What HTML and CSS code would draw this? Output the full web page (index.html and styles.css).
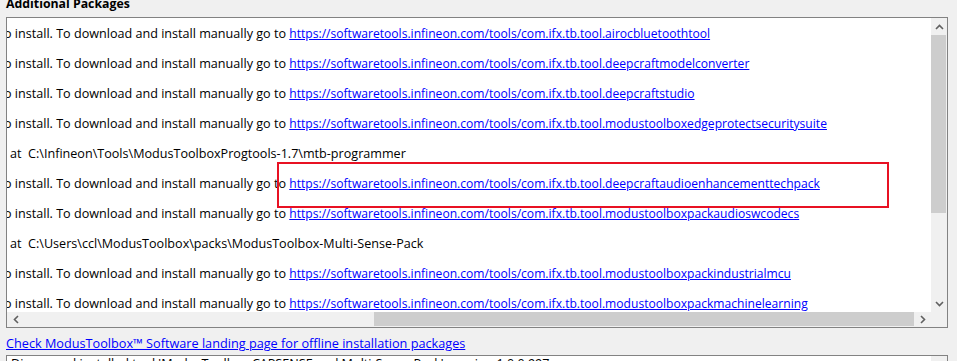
FILE: index.html
```html
<!DOCTYPE html>
<html>
<head>
<meta charset="utf-8">
<link rel="stylesheet" href="styles.css">
</head>
<body>
<div class="title">Additional Packages</div>
<div class="listbox">
  <div class="viewport">
    <div class="content">
      <div class="row"><span class="cut">o install. To download and install manually go to </span><a class="link">https://softwaretools.infineon.com/tools/com.ifx.tb.tool.airocbluetoothtool</a></div>
      <div class="row"><span class="cut">o install. To download and install manually go to </span><a class="link">https://softwaretools.infineon.com/tools/com.ifx.tb.tool.deepcraftmodelconverter</a></div>
      <div class="row"><span class="cut">o install. To download and install manually go to </span><a class="link">https://softwaretools.infineon.com/tools/com.ifx.tb.tool.deepcraftstudio</a></div>
      <div class="row"><span class="cut">o install. To download and install manually go to </span><a class="link">https://softwaretools.infineon.com/tools/com.ifx.tb.tool.modustoolboxedgeprotectsecuritysuite</a></div>
      <div class="row"><span class="at">at&nbsp; C:\Infineon\Tools\ModusToolboxProgtools-1.7\mtb-programmer</span></div>
      <div class="row"><span class="cut">o install. To download and install manually go to </span><a class="link">https://softwaretools.infineon.com/tools/com.ifx.tb.tool.deepcraftaudioenhancementtechpack</a></div>
      <div class="row"><span class="cut">o install. To download and install manually go to </span><a class="link">https://softwaretools.infineon.com/tools/com.ifx.tb.tool.modustoolboxpackaudioswcodecs</a></div>
      <div class="row"><span class="at">at&nbsp; C:\Users\ccl\ModusToolbox\packs\ModusToolbox-Multi-Sense-Pack</span></div>
      <div class="row"><span class="cut">o install. To download and install manually go to </span><a class="link">https://softwaretools.infineon.com/tools/com.ifx.tb.tool.modustoolboxpackindustrialmcu</a></div>
      <div class="row"><span class="cut">o install. To download and install manually go to </span><a class="link">https://softwaretools.infineon.com/tools/com.ifx.tb.tool.modustoolboxpackmachinelearning</a></div>
    </div>
    <div class="highlight"></div>
  </div>
  <div class="vscroll">
    <div class="arrow">
      <svg width="9" height="6" viewBox="0 0 9 6"><path d="M1 5 L4.5 1.5 L8 5" fill="none" stroke="#606060" stroke-width="1.6"/></svg>
    </div>
    <div class="vthumb"></div>
    <div class="vtrack"></div>
    <div class="arrow">
      <svg width="9" height="6" viewBox="0 0 9 6"><path d="M1 1 L4.5 4.5 L8 1" fill="none" stroke="#606060" stroke-width="1.6"/></svg>
    </div>
  </div>
  <div class="hscroll">
    <div class="harrow">
      <svg width="6" height="9" viewBox="0 0 6 9"><path d="M5 1 L1.5 4.5 L5 8" fill="none" stroke="#606060" stroke-width="1.6"/></svg>
    </div>
    <div class="htrack"></div>
    <div class="hthumb"></div>
    <div class="harrow">
      <svg width="6" height="9" viewBox="0 0 6 9"><path d="M1 1 L4.5 4.5 L1 8" fill="none" stroke="#606060" stroke-width="1.6"/></svg>
    </div>
  </div>
  <div class="corner"></div>
</div>
<a class="landing">Check ModusToolbox™ Software landing page for offline installation packages</a>
<div class="logbox">
  <div class="logtext">Discovered installed tool 'ModusToolbox CAPSENSE and Multi-Sense Pack', version 1.0.0.997</div>
  <div class="logscroll"></div>
</div>
</body>
</html>
```
FILE: styles.css
```css
html, body {
  margin: 0;
  padding: 0;
  background: #f0f0f0;
  width: 957px;
  height: 361px;
  overflow: hidden;
  font-family: "Open Sans", "Noto Sans", sans-serif;
  font-size: 12.6px;
  color: #000;
}

.title {
  height: 17px;
  margin-top: -5px;
  padding-left: 6px;
  font-weight: bold;
  font-size: 12.3px;
  line-height: 17px;
  box-sizing: border-box;
}

.listbox {
  margin-top: 5px;
  margin-left: 6px;
  width: 942px;
  height: 311px;
  box-sizing: border-box;
  border: 1px solid #828282;
  display: grid;
  grid-template-columns: 1fr 16px;
  grid-template-rows: 1fr 15px;
  background: #fff;
}

.viewport {
  grid-column: 1;
  grid-row: 1;
  overflow: hidden;
  position: relative;
  background: #fff;
}

.row {
  height: 30px;
  display: flex;
  align-items: center;
  white-space: pre;
}

.cut {
  margin-left: -3px;
}

.at {
  margin-left: 3px;
}

.link {
  color: #0000ff;
  text-decoration: underline;
  font-size: 12.1px;
}

.highlight {
  position: absolute;
  left: 270px;
  top: 144px;
  width: 608px;
  height: 42px;
  border: 2px solid #e81123;
}

.vscroll {
  grid-column: 2;
  grid-row: 1;
  background: #f0f0f0;
  display: flex;
  flex-direction: column;
}

.arrow {
  height: 17px;
  display: flex;
  align-items: center;
  justify-content: center;
  flex: none;
}

.vthumb {
  height: 178px;
  margin: 0 1px 0 0;
  background: #cdcdcd;
  flex: none;
}

.vtrack {
  flex: 1;
}

.hscroll {
  grid-column: 1;
  grid-row: 2;
  background: #f0f0f0;
  display: flex;
  align-items: stretch;
}

.harrow {
  width: 17px;
  display: flex;
  align-items: center;
  justify-content: center;
  flex: none;
}

.htrack {
  width: 350px;
  flex: none;
}

.hthumb {
  flex: 1;
  background: #cdcdcd;
  margin-bottom: 1px;
}

.corner {
  grid-column: 2;
  grid-row: 2;
  background: #f0f0f0;
}

.landing {
  display: block;
  margin: 7px 0 0 6px;
  height: 17px;
  line-height: 17px;
  font-size: 12.7px;
  color: #0000ff;
  text-decoration: underline;
}

.logbox {
  margin-top: 3px;
  margin-left: 6px;
  width: 942px;
  height: 6px;
  box-sizing: border-box;
  border: 1px solid #828282;
  border-bottom: none;
  background: #fff;
  display: flex;
  overflow: hidden;
}

.logtext {
  flex: 1;
  padding-left: 4px;
  margin-top: -1px;
  line-height: 17px;
  white-space: nowrap;
}

.logscroll {
  width: 16px;
  background: #f0f0f0;
}
```
